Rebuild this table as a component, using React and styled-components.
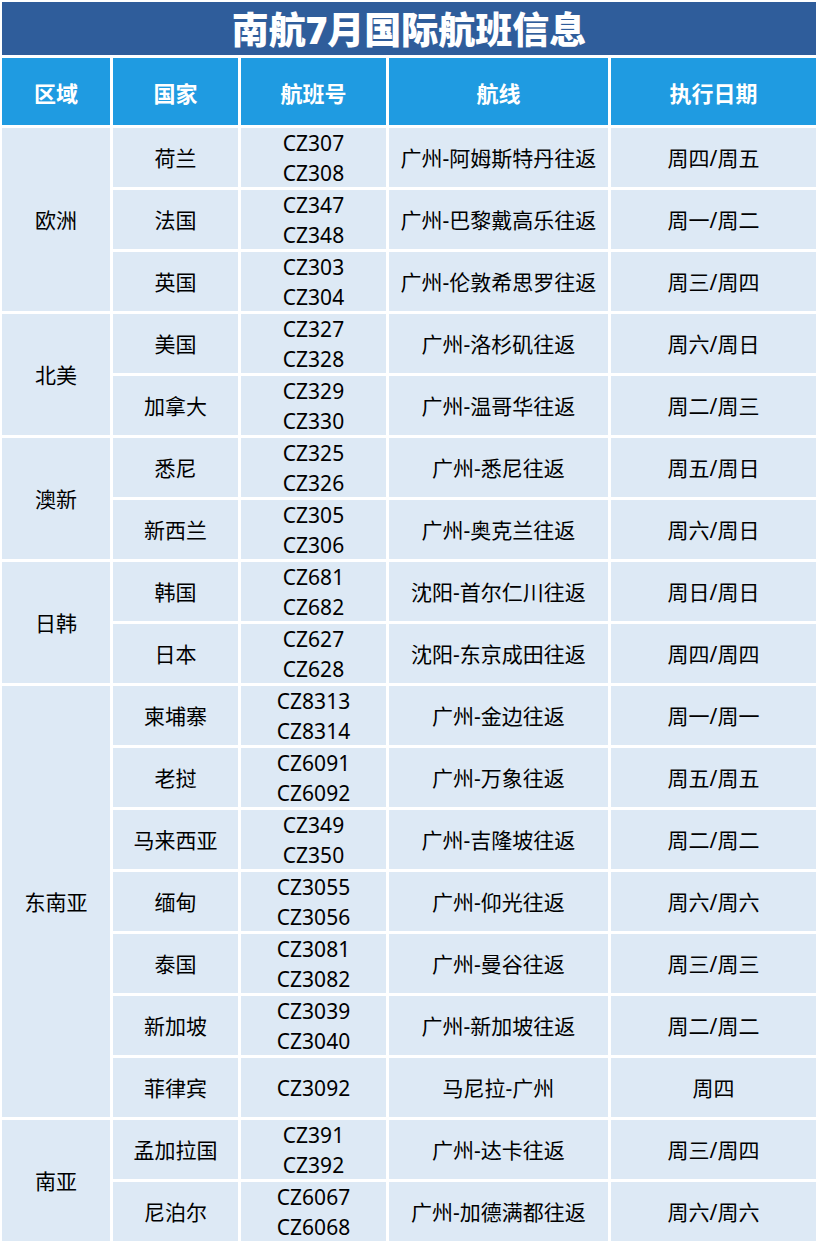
import React from "react";
import styled, { createGlobalStyle } from "styled-components";

const GlobalStyle = createGlobalStyle`
  html, body { margin: 0; padding: 0; background: #ffffff; }
  body { font-family: "Noto Sans", "Noto Sans CJK SC", sans-serif; }
`;

const Page = styled.div`
  width: 818px;
  padding: 2px 2px 3px;
  box-sizing: border-box;
  display: flex;
  flex-direction: column;
  gap: 3px;
`;

const TitleBar = styled.div`
  height: 53px;
  background: #2f5d9b;
  color: #ffffff;
  display: flex;
  align-items: center;
  justify-content: center;
  font-family: "Noto Sans", "Noto Sans CJK SC", sans-serif;
  font-weight: 900;
  font-size: 37px;
  padding-bottom: 1px;
  box-sizing: border-box;
`;

const Table = styled.div`
  display: grid;
  grid-template-columns: 108px 125px 145px 219px 205px;
  grid-template-rows: 67px repeat(18, 59px);
  column-gap: 3px;
  row-gap: 3px;
`;

const HeadCell = styled.div`
  background: #1f9be1;
  color: #ffffff;
  font-weight: 700;
  font-size: 22px;
  display: flex;
  align-items: center;
  justify-content: center;
`;

const Cell = styled.div`
  background: #dde9f5;
  color: #000000;
  font-size: 21px;
  line-height: 30px;
  display: flex;
  flex-direction: column;
  align-items: center;
  justify-content: center;
  text-align: center;
  white-space: nowrap;
  grid-row: ${(p) => (p.$span ? `span ${p.$span}` : "auto")};
`;

const groups = [
  {
    region: "欧洲",
    rows: [
      ["荷兰", ["CZ307", "CZ308"], "广州-阿姆斯特丹往返", "周四/周五"],
      ["法国", ["CZ347", "CZ348"], "广州-巴黎戴高乐往返", "周一/周二"],
      ["英国", ["CZ303", "CZ304"], "广州-伦敦希思罗往返", "周三/周四"],
    ],
  },
  {
    region: "北美",
    rows: [
      ["美国", ["CZ327", "CZ328"], "广州-洛杉矶往返", "周六/周日"],
      ["加拿大", ["CZ329", "CZ330"], "广州-温哥华往返", "周二/周三"],
    ],
  },
  {
    region: "澳新",
    rows: [
      ["悉尼", ["CZ325", "CZ326"], "广州-悉尼往返", "周五/周日"],
      ["新西兰", ["CZ305", "CZ306"], "广州-奥克兰往返", "周六/周日"],
    ],
  },
  {
    region: "日韩",
    rows: [
      ["韩国", ["CZ681", "CZ682"], "沈阳-首尔仁川往返", "周日/周日"],
      ["日本", ["CZ627", "CZ628"], "沈阳-东京成田往返", "周四/周四"],
    ],
  },
  {
    region: "东南亚",
    rows: [
      ["柬埔寨", ["CZ8313", "CZ8314"], "广州-金边往返", "周一/周一"],
      ["老挝", ["CZ6091", "CZ6092"], "广州-万象往返", "周五/周五"],
      ["马来西亚", ["CZ349", "CZ350"], "广州-吉隆坡往返", "周二/周二"],
      ["缅甸", ["CZ3055", "CZ3056"], "广州-仰光往返", "周六/周六"],
      ["泰国", ["CZ3081", "CZ3082"], "广州-曼谷往返", "周三/周三"],
      ["新加坡", ["CZ3039", "CZ3040"], "广州-新加坡往返", "周二/周二"],
      ["菲律宾", ["CZ3092"], "马尼拉-广州", "周四"],
    ],
  },
  {
    region: "南亚",
    rows: [
      ["孟加拉国", ["CZ391", "CZ392"], "广州-达卡往返", "周三/周四"],
      ["尼泊尔", ["CZ6067", "CZ6068"], "广州-加德满都往返", "周六/周六"],
    ],
  },
];

const headers = ["区域", "国家", "航班号", "航线", "执行日期"];

export default function App() {
  return (
    <>
      <GlobalStyle />
      <Page>
        <TitleBar>南航7月国际航班信息</TitleBar>
        <Table>
          {headers.map((h) => (
            <HeadCell key={h}>{h}</HeadCell>
          ))}
          {groups.map((g) =>
            g.rows.map((r, i) => (
              <React.Fragment key={r[0]}>
                {i === 0 && <Cell $span={g.rows.length}>{g.region}</Cell>}
                <Cell>{r[0]}</Cell>
                <Cell>
                  {r[1].map((f) => (
                    <span key={f}>{f}</span>
                  ))}
                </Cell>
                <Cell>{r[2]}</Cell>
                <Cell>{r[3]}</Cell>
              </React.Fragment>
            ))
          )}
        </Table>
      </Page>
    </>
  );
}
